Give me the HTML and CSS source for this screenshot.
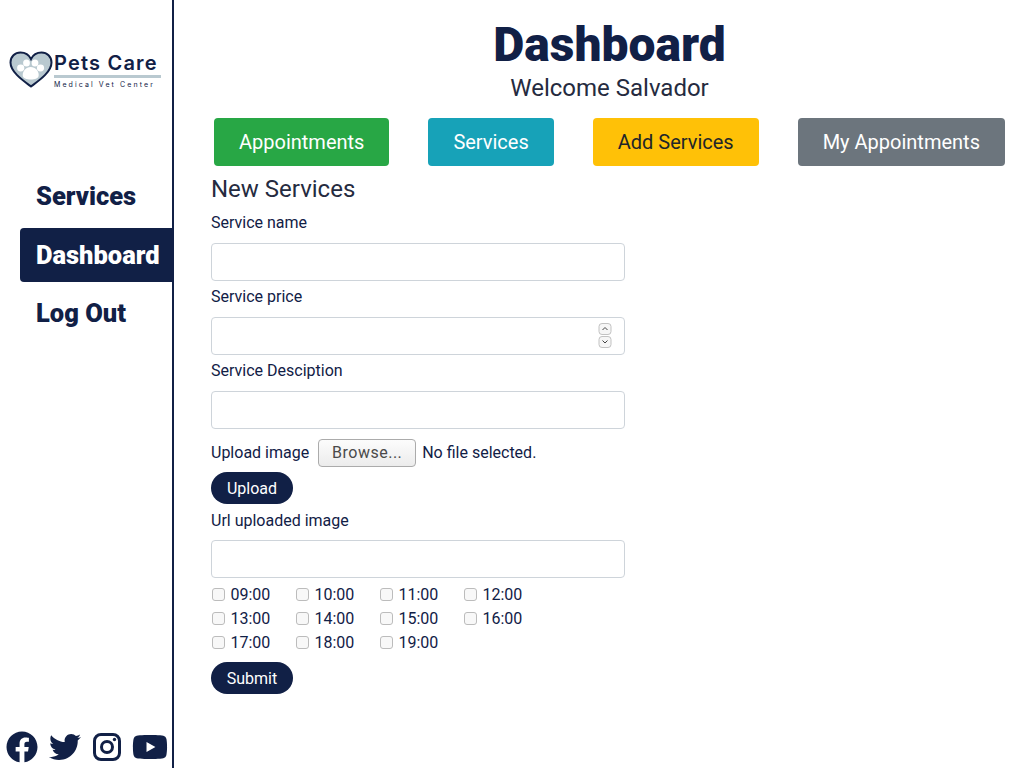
FILE: index.html
```html
<!DOCTYPE html>
<html lang="en">
<head>
    <meta charset="UTF-8">
    <meta name="viewport" content="width=device-width, initial-scale=1.0">
    <title>Pets Care - Dashboard</title>
    <link rel="stylesheet" href="styles.css">
</head>
<body>
    <aside class="sidebar">
        <div class="logo">
            <svg class="logo-heart" viewBox="0 0 44 37" width="44" height="37">
                <path d="M22 35.5C14 29.500 1.500 21 1.500 11.500C1.500 5.500 6 1.500 11.500 1.500C16 1.500 20 4 22 8C24 4 28 1.500 32.500 1.500C38 1.500 42.500 5.500 42.500 11.500C42.500 21 30 29.500 22 35.500Z" fill="#b9c9d0" stroke="#112046" stroke-width="2"/>
                <ellipse cx="11.700" cy="17" rx="3.600" ry="3.400" fill="#fff"/>
                <ellipse cx="17.500" cy="12" rx="3.400" ry="3.600" fill="#fff"/>
                <ellipse cx="26" cy="12" rx="3.400" ry="3.600" fill="#fff"/>
                <ellipse cx="31.500" cy="17" rx="3.600" ry="3.400" fill="#fff"/>
                <path d="M21.700 16C26.500 16 29.700 20 29.700 24C29.700 27.500 26 28.500 21.700 28.500C17.500 28.500 13.700 27.500 13.700 24C13.700 20 17 16 21.700 16Z" fill="#fff"/>
            </svg>
            <div class="logo-text">
                <span class="logo-name">Pets Care</span>
                <span class="logo-sub">Medical Vet Center</span>
            </div>
        </div>

        <nav class="side-nav">
            <a href="#">Services</a>
            <a href="#" class="active">Dashboard</a>
            <a href="#">Log Out</a>
        </nav>

        <div class="socials">
            <svg viewBox="0 0 512 512" width="32" height="32"><path d="M504 256C504 119 393 8 256 8S8 119 8 256c0 123.780 90.690 226.380 209.250 245V327.690h-63V256h63v-54.640c0-62.150 37-96.480 93.670-96.480 27.140 0 55.520 4.840 55.520 4.840v61h-31.280c-30.800 0-40.410 19.120-40.410 38.730V256h68.780l-11 71.690h-57.780V501C413.310 482.380 504 379.780 504 256z"/></svg>
            <svg viewBox="0 0 512 512" width="32" height="32"><path d="M459.370 151.716c.325 4.548.325 9.097.325 13.645 0 138.720-105.583 298.558-298.558 298.558-59.452 0-114.680-17.219-161.137-47.106 8.447.974 16.568 1.299 25.340 1.299 49.055 0 94.213-16.568 130.274-44.832-46.132-.975-84.792-31.188-98.112-72.772 6.498.974 12.995 1.624 19.818 1.624 9.421 0 18.843-1.300 27.614-3.573-48.081-9.747-84.143-51.980-84.143-102.985v-1.299c13.969 7.797 30.214 12.670 47.431 13.319-28.264-18.843-46.781-51.005-46.781-87.391 0-19.492 5.197-37.360 14.294-52.954 51.655 63.675 129.300 105.258 216.365 109.807-1.624-7.797-2.599-15.918-2.599-24.040 0-57.828 46.782-104.934 104.934-104.934 30.213 0 57.502 12.670 76.670 33.137 23.715-4.548 46.456-13.320 66.599-25.340-7.798 24.366-24.366 44.833-46.132 57.827 21.117-2.273 41.584-8.122 60.426-16.243-14.292 20.791-32.161 39.308-52.628 54.253z"/></svg>
            <svg viewBox="0 0 28 32" width="28" height="32">
                <rect x="1.500" y="3.500" width="25" height="25" rx="6.500" fill="none" stroke="#112046" stroke-width="3"/>
                <circle cx="14" cy="16" r="5.500" fill="none" stroke="#112046" stroke-width="3"/>
                <circle cx="21.500" cy="8.500" r="1.700"/>
            </svg>
            <svg viewBox="0 0 576 512" width="36" height="32"><path d="M549.655 124.083c-6.281-23.650-24.787-42.276-48.284-48.597C458.781 64 288 64 288 64S117.220 64 74.629 75.486c-23.497 6.322-42.003 24.947-48.284 48.597-11.412 42.867-11.412 132.305-11.412 132.305s0 89.438 11.412 132.305c6.281 23.650 24.787 41.500 48.284 47.821C117.220 448 288 448 288 448s170.780 0 213.371-11.486c23.497-6.321 42.003-24.171 48.284-47.821 11.412-42.867 11.412-132.305 11.412-132.305s0-89.438-11.412-132.305zm-317.510 213.508V175.185l142.739 81.205-142.739 81.201z"/></svg>
        </div>
    </aside>

    <main class="content">
        <header class="page-head">
            <h1>Dashboard</h1>
            <p>Welcome Salvador</p>
        </header>

        <div class="tabs">
            <a href="#" class="tab tab-green">Appointments</a>
            <a href="#" class="tab tab-cyan">Services</a>
            <a href="#" class="tab tab-yellow">Add Services</a>
            <a href="#" class="tab tab-gray">My Appointments</a>
        </div>

        <form class="service-form">
            <h2>New Services</h2>

            <label for="name">Service name</label>
            <input type="text" id="name">

            <label for="price">Service price</label>
            <div class="number-field">
                <input type="number" id="price">
                <svg class="spinner" viewBox="0 0 14 26" width="14" height="26">
                    <rect x="1" y="0.500" width="12" height="11" rx="3" fill="#f6f6f6" stroke="#c2c2c2"/>
                    <path d="M4.500 7L7 4.500L9.500 7" fill="none" stroke="#444" stroke-width="1"/>
                    <rect x="1" y="13.500" width="12" height="11" rx="3" fill="#f6f6f6" stroke="#c2c2c2"/>
                    <path d="M4.500 17.500L7 20L9.500 17.500" fill="none" stroke="#444" stroke-width="1"/>
                </svg>
            </div>

            <label for="desc">Service Desciption</label>
            <input type="text" id="desc">

            <div class="upload-row">
                <span>Upload image</span>
                <button type="button" class="browse">Browse...</button>
                <span>No file selected.</span>
            </div>
            <button type="button" class="pill">Upload</button>

            <label for="url" class="url-label">Url uploaded image</label>
            <input type="text" id="url">

            <div class="hours">
                <label><input type="checkbox"> 09:00</label>
                <label><input type="checkbox"> 10:00</label>
                <label><input type="checkbox"> 11:00</label>
                <label><input type="checkbox"> 12:00</label>
                <label><input type="checkbox"> 13:00</label>
                <label><input type="checkbox"> 14:00</label>
                <label><input type="checkbox"> 15:00</label>
                <label><input type="checkbox"> 16:00</label>
                <label><input type="checkbox"> 17:00</label>
                <label><input type="checkbox"> 18:00</label>
                <label><input type="checkbox"> 19:00</label>
            </div>

            <button type="submit" class="pill">Submit</button>
        </form>
    </main>
</body>
</html>
```

FILE: styles.css
```css
* {
    box-sizing: border-box;
}

body {
    margin: 0;
    display: flex;
    height: 100vh;
    overflow: hidden;
    font-family: Roboto, sans-serif;
    font-size: 16px;
    line-height: 24px;
    color: #112046;
    background-color: #fff;
}

a {
    text-decoration: none;
}

/* Sidebar */
.sidebar {
    flex: 0 0 174px;
    min-width: 0;
    display: flex;
    flex-direction: column;
    border-right: 2px solid #112046;
}

.logo {
    display: flex;
    gap: 1px;
    margin: 51px 0 0 9px;
}

.logo-text {
    display: flex;
    flex-direction: column;
}

.logo-name {
    padding: 1px 3px 0 0;
    font-family: Inter, sans-serif;
    font-size: 20px;
    font-weight: 600;
    line-height: 23px;
    letter-spacing: 1.2px;
    border-bottom: 3px solid #b9c9d0;
}

.logo-sub {
    font-family: Inter, sans-serif;
    font-size: 7px;
    line-height: 13px;
    letter-spacing: 2.1px;
    white-space: nowrap;
}

.side-nav {
    display: flex;
    flex-direction: column;
    gap: 4.500px;
    margin: 78px 0 0 20px;
}

.side-nav a {
    padding: 8px 8px 8px 16px;
    font-size: 25.500px;
    font-weight: 900;
    line-height: 38px;
    white-space: nowrap;
    color: #112046;
}

.side-nav a.active {
    color: #fff;
    background-color: #112046;
    border-radius: 4px 0 0 4px;
}

.socials {
    display: flex;
    justify-content: space-between;
    margin-top: auto;
    padding: 0 4px 5px 6px;
    fill: #112046;
}

/* Main area */
.content {
    flex: 1;
    margin: 0 -0.500px 0 20.500px;
}

.page-head {
    padding-top: 15px;
    text-align: center;
}

.page-head h1 {
    margin: 0;
    font-size: 48px;
    font-weight: 900;
    line-height: 59px;
}

.page-head p {
    margin: 0;
    font-size: 24px;
    line-height: 29px;
    color: #252b40;
}

.tabs {
    display: flex;
    justify-content: space-around;
    margin-top: 15px;
}

.tab {
    padding: 0 25px;
    font-size: 20px;
    line-height: 48px;
    border-radius: 4px;
    color: #fff;
}

.tab-green {
    background-color: #28a745;
}

.tab-cyan {
    background-color: #17a2b8;
}

.tab-yellow {
    color: #212529;
    background-color: #ffc107;
}

.tab-gray {
    background-color: #6c757d;
}

/* Form */
.service-form {
    width: 414px;
    margin-left: 16.500px;
}

.service-form h2 {
    margin: 9px 0 7px;
    font-size: 24px;
    font-weight: 400;
    line-height: 29px;
    color: #252b40;
}

.service-form > label {
    display: block;
    margin-bottom: 8px;
}

.service-form input[type="text"],
.service-form input[type="number"] {
    display: block;
    width: 100%;
    height: 38px;
    margin-bottom: 4px;
    border: 1px solid #ced4da;
    border-radius: 4px;
    appearance: textfield;
}

.number-field {
    position: relative;
}

.spinner {
    position: absolute;
    top: 6px;
    right: 13px;
}

.upload-row {
    display: flex;
    align-items: center;
    height: 28px;
    margin: 10px 0 5px;
}

.browse {
    width: 98px;
    height: 28px;
    margin: 0 6px 0 9px;
    padding: 0 0 2px;
    font-family: Roboto, sans-serif;
    font-size: 16px;
    letter-spacing: 0.5px;
    color: #4a4a4a;
    background: linear-gradient(#fcfcfc, #ececec);
    border: 1px solid #ababab;
    border-radius: 4px;
}

.pill {
    display: block;
    width: 82px;
    height: 32px;
    padding: 0;
    font-family: Roboto, sans-serif;
    font-size: 16px;
    color: #fff;
    background-color: #112046;
    border: none;
    border-radius: 16px;
}

.service-form > .url-label {
    margin: 5px 0 7px;
}

.hours {
    display: grid;
    grid-template-columns: repeat(4, 84px);
    margin: 0 0 8px;
}

.hours label {
    display: flex;
    align-items: flex-start;
    gap: 6px;
    height: 24px;
    padding: 1px 0 0 0.500px;
}

.hours input {
    appearance: none;
    width: 13px;
    height: 13px;
    margin: 5px 0 0;
    background-color: #f8f8f8;
    border: 1px solid #bcbcbc;
    border-radius: 3px;
}
```
